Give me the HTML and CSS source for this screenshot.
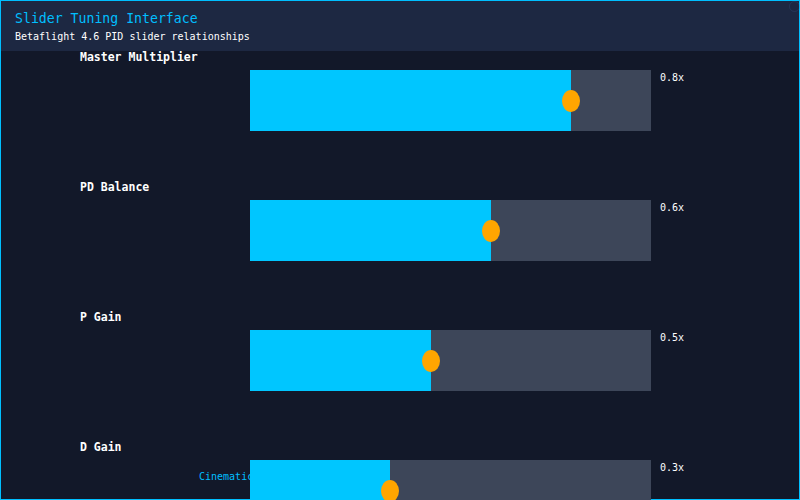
FILE: index.html
```html
<!DOCTYPE html>
<html lang="en">

<head>
  <meta charset="UTF-8" />
  <meta name="viewport" content="width=device-width, initial-scale=1.0">
  <title>Slider Tuning Interface</title>
  <link rel="stylesheet" href="styles.css">
</head>

<body>
  <div class="frame">
    <header class="top">
      <h1>Slider Tuning Interface</h1>
      <p>Betaflight 4.6 PID slider relationships</p>
      <span class="status"></span>
    </header>

    <main class="sliders">
      <section class="slider">
        <div class="name">Master Multiplier</div>
        <div class="row">
          <div class="side"></div>
          <div class="track">
            <div class="fill" style="width: 80%"></div>
            <span class="thumb" style="left: 80%"></span>
          </div>
          <div class="value">0.8x</div>
        </div>
      </section>

      <section class="slider">
        <div class="name">PD Balance</div>
        <div class="row">
          <div class="side"></div>
          <div class="track">
            <div class="fill" style="width: 60%"></div>
            <span class="thumb" style="left: 60%"></span>
          </div>
          <div class="value">0.6x</div>
        </div>
      </section>

      <section class="slider">
        <div class="name">P Gain</div>
        <div class="row">
          <div class="side"></div>
          <div class="track">
            <div class="fill" style="width: 45.2%"></div>
            <span class="thumb" style="left: 45.2%"></span>
          </div>
          <div class="value">0.5x</div>
        </div>
      </section>

      <section class="slider">
        <div class="name">D Gain</div>
        <div class="row">
          <div class="side"><span class="hint">Cinematic</span></div>
          <div class="track">
            <div class="fill" style="width: 35%"></div>
            <span class="thumb" style="left: 35%"></span>
          </div>
          <div class="value">0.3x</div>
        </div>
      </section>
    </main>
  </div>
</body>

</html>
```

FILE: styles.css
```css
* {
  box-sizing: border-box;
}

body {
  margin: 0;
  font-family: 'DejaVu Sans Mono', monospace;
  background-color: #121829;
  color: #ffffff;
}

.frame {
  position: relative;
  height: 500px;
  border: 1px solid #00bfff;
}

.top {
  position: relative;
  height: 50px;
  padding: 9px 14px 0;
  background-color: #1d2842;
}

.top h1 {
  margin: 0;
  font-size: 13.2px;
  font-weight: normal;
  line-height: 18px;
  color: #00bfff;
}

.top p {
  margin: 2px 0 0;
  font-size: 10px;
  line-height: 13px;
}

.status {
  position: absolute;
  top: 0;
  right: -1px;
  width: 11px;
  height: 11px;
  border: 1px solid rgba(80, 110, 170, 0.18);
  border-radius: 50%;
}

.sliders {
  padding-left: 79px;
}

.slider {
  margin-bottom: 50px;
}

.name {
  margin: -1px 0 6px;
  font-size: 11.5px;
  font-weight: bold;
  line-height: 14px;
}

.row {
  display: flex;
  align-items: flex-start;
}

.side {
  width: 170px;
  flex-shrink: 0;
}

.hint {
  display: block;
  margin: 11px 0 0 119px;
  font-size: 10px;
  line-height: 12px;
  color: #00bfff;
  white-space: nowrap;
}

.track {
  position: relative;
  width: 401px;
  height: 61px;
  flex-shrink: 0;
  background-color: #3d4659;
}

.fill {
  height: 100%;
  background-color: #00c6ff;
}

.thumb {
  position: absolute;
  top: 50%;
  width: 18px;
  height: 22px;
  border-radius: 50%;
  background-color: #ffa500;
  transform: translate(-50%, -50%);
}

.value {
  margin: 2px 0 0 9px;
  font-size: 10px;
  line-height: 12px;
}
```
